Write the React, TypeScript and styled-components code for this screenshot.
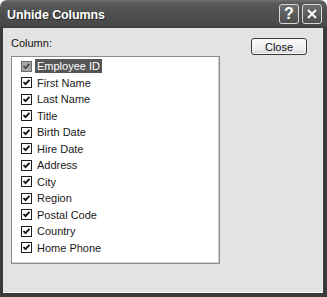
import React from "react";
import styled, { createGlobalStyle } from "styled-components";

const Global = createGlobalStyle`
  html, body { margin: 0; padding: 0; background: #ffffff; }
  body { font-family: "Liberation Sans", Arial, sans-serif; }
`;

const Window = styled.div`
  width: 327px;
  height: 297px;
  display: flex;
  flex-direction: column;
  box-sizing: border-box;
`;

const TitleBar = styled.div`
  height: 28px;
  flex: none;
  display: flex;
  align-items: center;
  padding: 0 5px 0 7px;
  box-sizing: border-box;
  border-radius: 7px 7px 0 0;
  background: linear-gradient(#707070 0px, #5a5a5a 3px, #4e4e4e 14px, #4a4a4a 24px, #404040 28px);
`;

const Title = styled.div`
  flex: 1;
  color: #ffffff;
  font-family: "Liberation Sans", Arial, sans-serif;
  font-weight: bold;
  font-size: 12.5px;
  letter-spacing: -0.1px;
  text-shadow: 1px 1px 0 #2a2a2a;
  padding-top: 1px;
`;

const CaptionButtons = styled.div`
  display: flex;
  gap: 3px;
`;

const CaptionButton = styled.div`
  width: 20px;
  height: 20px;
  box-sizing: border-box;
  border: 1px solid #d8d8d8;
  border-radius: 3px;
  background: linear-gradient(#6e6e6e, #4e4e4e);
  display: flex;
  align-items: center;
  justify-content: center;
  color: #ffffff;
  font-family: "Liberation Sans", Arial, sans-serif;
  font-weight: bold;
  font-size: 16px;
`;

const Frame = styled.div`
  flex: 1;
  display: flex;
  background: #e3e3e3;
  border-style: solid;
  border-color: #3a3a3a;
  border-width: 0 4px 4px 3px;
  box-shadow: inset 0 -1px 0 #f4f4f4, inset -1px 0 0 #f0f0f0;
  padding: 9px 16px 0 8px;
  box-sizing: border-box;
`;

const LeftColumn = styled.div`
  width: 209px;
  display: flex;
  flex-direction: column;
`;

const Label = styled.div`
  font-size: 11px;
  color: #111111;
  height: 19px;
  line-height: 13px;
`;

const ListBox = styled.div`
  height: 208px;
  box-sizing: border-box;
  background: #ffffff;
  border: 1px solid #8c8c8c;
  box-shadow: inset -1px -1px 0 #d0d0d0;
  padding: 1px 0 0 9px;
`;

const Row = styled.div`
  height: 16.5px;
  display: flex;
  align-items: center;
`;

const Box = styled.div<{ $sel?: boolean }>`
  width: 11px;
  height: 11px;
  box-sizing: border-box;
  border: 1px solid ${(p) => (p.$sel ? "#6a6a6a" : "#1e1e1e")};
  background: ${(p) => (p.$sel ? "#a8a8a8" : "#ffffff")};
  display: flex;
  align-items: center;
  justify-content: center;
  margin-right: 3px;
`;

const ItemText = styled.div<{ $sel?: boolean }>`
  font-size: 11px;
  line-height: 14px;
  height: 14px;
  padding: 0 2px 0 2px;
  color: ${(p) => (p.$sel ? "#ffffff" : "#1a1a1a")};
  background: ${(p) => (p.$sel ? "#555555" : "transparent")};
`;

const RightColumn = styled.div`
  flex: 1;
  display: flex;
  justify-content: flex-end;
  padding-top: 1px;
`;

const Button = styled.div`
  width: 56px;
  height: 17px;
  box-sizing: border-box;
  border: 1px solid #3a3a3a;
  border-radius: 3px;
  background: linear-gradient(#fafafa, #ececec 70%, #d8d8d8);
  box-shadow: inset 0 0 0 1px #f8f8f8;
  display: flex;
  align-items: center;
  justify-content: center;
  font-size: 11px;
  color: #111111;
`;

const items = [
  "Employee ID",
  "First Name",
  "Last Name",
  "Title",
  "Birth Date",
  "Hire Date",
  "Address",
  "City",
  "Region",
  "Postal Code",
  "Country",
  "Home Phone",
];

const Check = ({ color }: { color: string }) => (
  <svg width="9" height="9" viewBox="0 0 9 9">
    <path d="M1.5 4 L3.5 6.2 L7.5 1.8" fill="none" stroke={color} strokeWidth="1.8" />
  </svg>
);

export default function App() {
  return (
    <Window>
      <Global />
      <TitleBar>
        <Title>Unhide Columns</Title>
        <CaptionButtons>
          <CaptionButton>?</CaptionButton>
          <CaptionButton>
            <svg width="12" height="12" viewBox="0 0 12 12">
              <path d="M2 2 L10 10 M10 2 L2 10" stroke="#ffffff" strokeWidth="2" />
            </svg>
          </CaptionButton>
        </CaptionButtons>
      </TitleBar>
      <Frame>
        <LeftColumn>
          <Label>Column:</Label>
          <ListBox>
            {items.map((it, i) => (
              <Row key={it}>
                <Box $sel={i === 0}>
                  <Check color={i === 0 ? "#4a4a4a" : "#111111"} />
                </Box>
                <ItemText $sel={i === 0}>{it}</ItemText>
              </Row>
            ))}
          </ListBox>
        </LeftColumn>
        <RightColumn>
          <Button>Close</Button>
        </RightColumn>
      </Frame>
    </Window>
  );
}
